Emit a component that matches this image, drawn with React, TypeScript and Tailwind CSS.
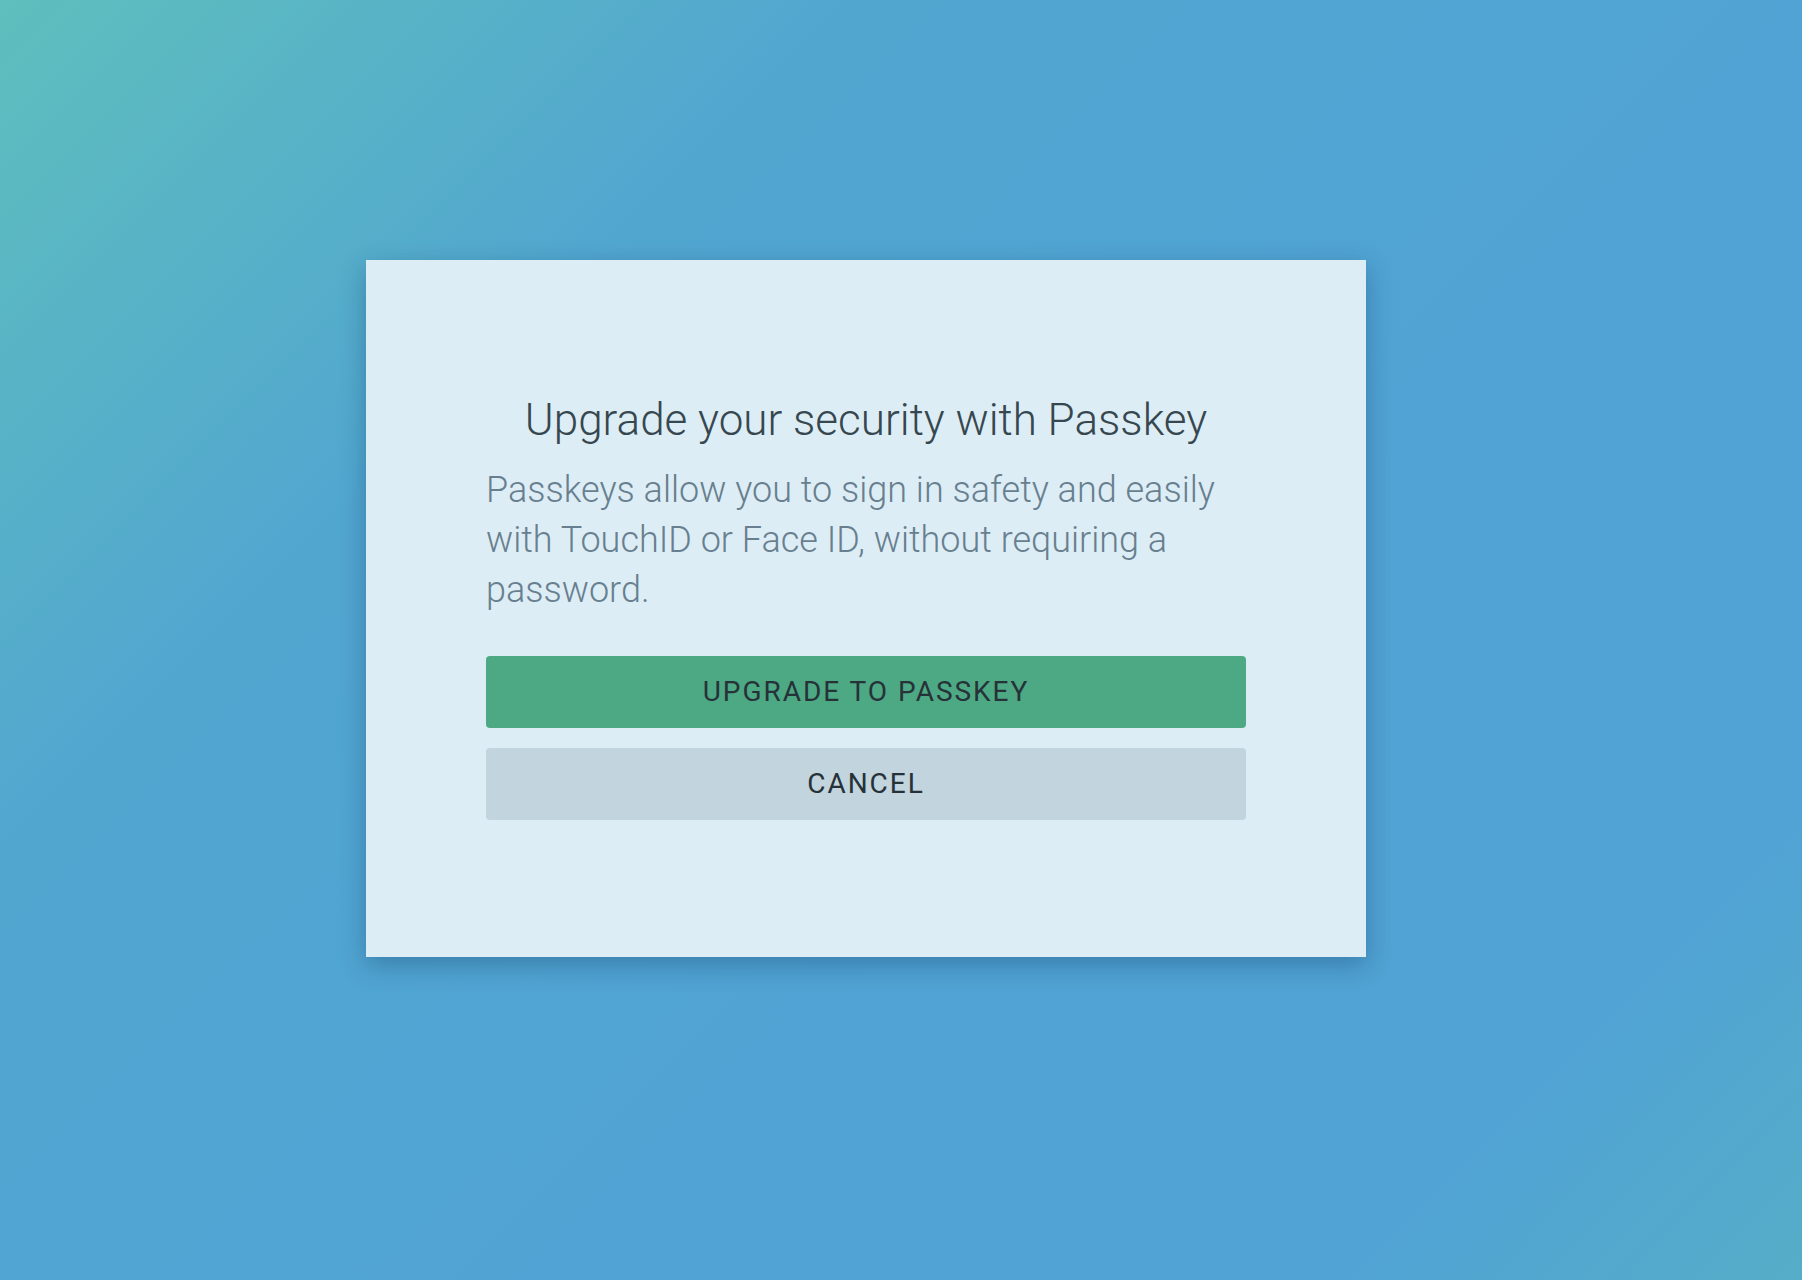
import React from 'react';

export default function App() {
  return (
    <div
      className="min-h-screen w-full pl-[366px] pt-[260px] bg-[linear-gradient(135deg,#5ebfbd_0%,#51a6d0_28%,#50a3d4_60%,#50a3d4_85%,#55adc8_100%)]"
      style={{ fontFamily: 'Roboto, "Open Sans", sans-serif' }}
    >
      <div className="w-[1000px] h-[697px] bg-[#ddedf5] px-[120px] pt-[134px] shadow-[0_8px_24px_rgba(0,40,80,0.3)]">
        <h1 className="text-center text-[44px] leading-[52px] font-light text-[#37474f]">
          Upgrade your security with Passkey
        </h1>
        <p className="mt-[19px] text-[36px] leading-[50px] font-light text-[#687f8f]">
          Passkeys allow you to sign in safety and easily with TouchID or Face ID, without requiring a password.
        </p>

        <div className="mt-[41px] flex flex-col gap-5">
          <button className="h-[72px] w-full rounded bg-[#4da884] text-[28px] tracking-[0.07em] text-[#263238] uppercase">
            Upgrade to Passkey
          </button>
          <button className="h-[72px] w-full rounded bg-[#c2d4dd] text-[28px] tracking-[0.07em] text-[#263238] uppercase">
            Cancel
          </button>
        </div>
      </div>
    </div>
  );
}
